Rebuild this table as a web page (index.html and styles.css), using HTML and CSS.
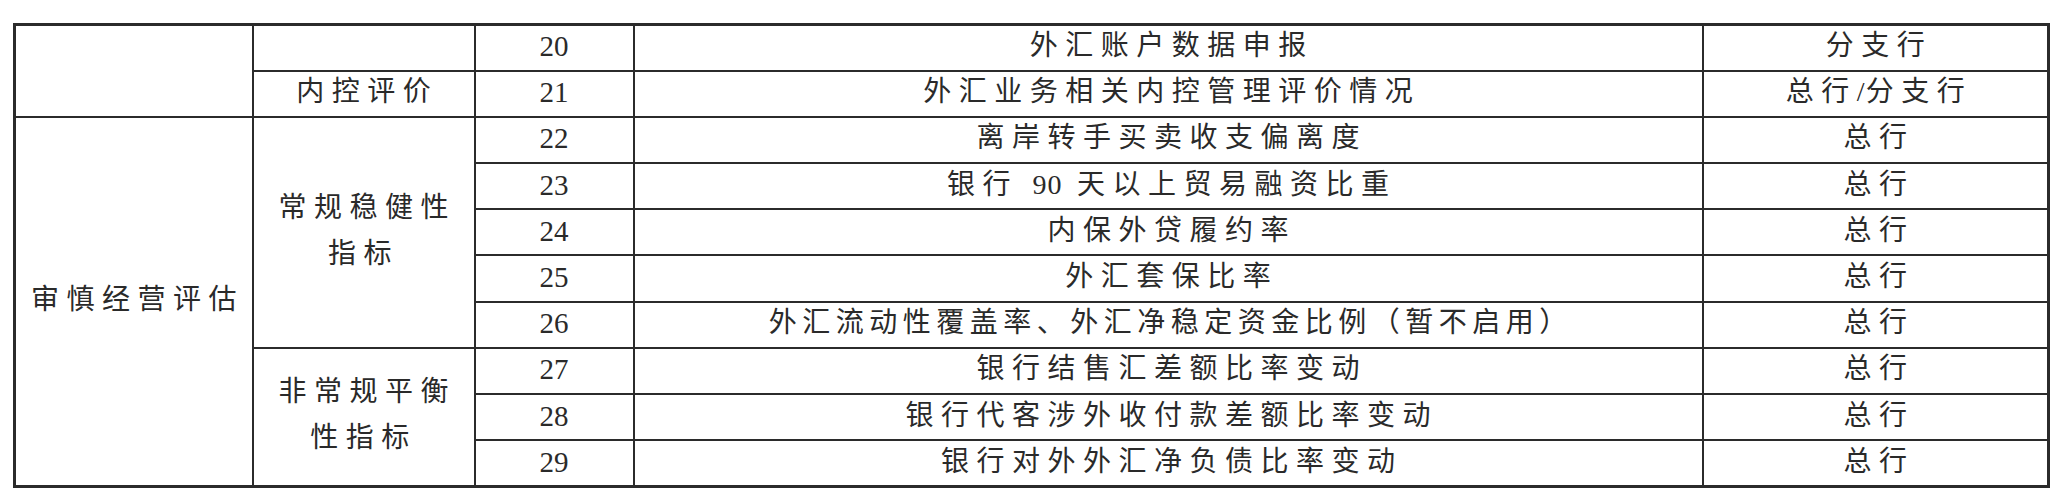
FILE: index.html
```html
<!DOCTYPE html>
<html lang="zh-CN">
<head>
<meta charset="utf-8">
<title>审慎经营评估</title>
<link rel="stylesheet" href="styles.css">
</head>
<body>
<table class="grid">
  <colgroup>
    <col class="c-cat">
    <col class="c-sub">
    <col class="c-no">
    <col class="c-item">
    <col class="c-lvl">
  </colgroup>
  <tbody>
    <tr>
      <td rowspan="2"></td>
      <td></td>
      <td class="no">20</td>
      <td>外汇账户数据申报</td>
      <td>分支行</td>
    </tr>
    <tr>
      <td>内控评价</td>
      <td class="no">21</td>
      <td>外汇业务相关内控管理评价情况</td>
      <td>总行<span class="slash">/</span>分支行</td>
    </tr>
    <tr>
      <td rowspan="8" class="cat">审慎经营评估</td>
      <td rowspan="5" class="multi">常规稳健性<br>指标</td>
      <td class="no">22</td>
      <td>离岸转手买卖收支偏离度</td>
      <td>总行</td>
    </tr>
    <tr>
      <td class="no">23</td>
      <td>银行 <span class="num">90</span> 天以上贸易融资比重</td>
      <td>总行</td>
    </tr>
    <tr>
      <td class="no">24</td>
      <td>内保外贷履约率</td>
      <td>总行</td>
    </tr>
    <tr>
      <td class="no">25</td>
      <td>外汇套保比率</td>
      <td>总行</td>
    </tr>
    <tr>
      <td class="no">26</td>
      <td class="tight">外汇流动性覆盖率、外汇净稳定资金比例（暂不启用）</td>
      <td>总行</td>
    </tr>
    <tr>
      <td rowspan="3" class="multi">非常规平衡<br>性指标</td>
      <td class="no">27</td>
      <td>银行结售汇差额比率变动</td>
      <td>总行</td>
    </tr>
    <tr>
      <td class="no">28</td>
      <td>银行代客涉外收付款差额比率变动</td>
      <td>总行</td>
    </tr>
    <tr>
      <td class="no">29</td>
      <td>银行对外外汇净负债比率变动</td>
      <td>总行</td>
    </tr>
  </tbody>
</table>
</body>
</html>
```

FILE: styles.css
```css
html, body {
  margin: 0;
  padding: 0;
  background: #ffffff;
}

body {
  padding: 23px 0 0 13px;
}

.grid {
  table-layout: fixed;
  border-collapse: collapse;
  width: 2034px;
  border: 3px solid #2b2b2b;
  font-family: "Liberation Serif", "Noto Sans CJK SC", serif;
  color: #2a2a2a;
}

.c-cat { width: 238px; }
.c-sub { width: 222px; }
.c-no { width: 159px; }
.c-item { width: 1069px; }
.c-lvl { width: 346px; }

.grid tr {
  height: 46.2px;
}

.grid td {
  border: 2px solid #2b2b2b;
  padding: 0 0 3px 0;
  text-align: center;
  vertical-align: middle;
  font-size: 28px;
  line-height: 40px;
  letter-spacing: 7.5px;
  text-indent: 7.5px;
  white-space: nowrap;
}

.grid td.multi {
  line-height: 46px;
}

.grid td.tight {
  letter-spacing: 5.5px;
  text-indent: 5.5px;
}

.grid td.no {
  font-size: 29px;
  letter-spacing: 0;
  text-indent: 0;
}

.grid td.cat {
  text-align: left;
  text-indent: 0;
  padding-left: 15px;
}

.num {
  letter-spacing: 1px;
}

.slash {
  letter-spacing: 1px;
}
```
